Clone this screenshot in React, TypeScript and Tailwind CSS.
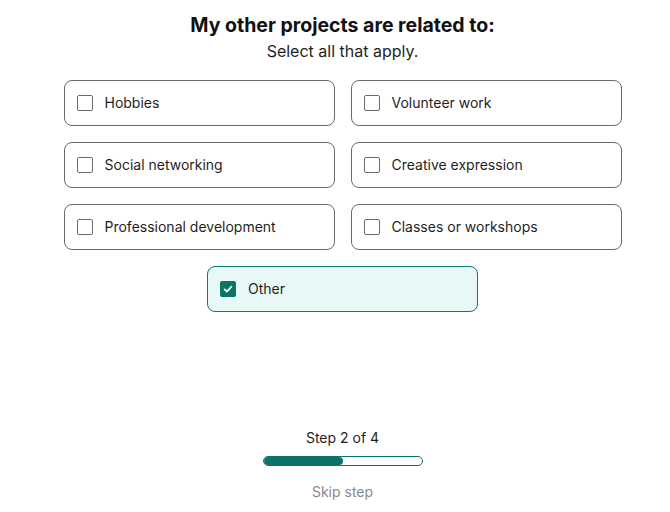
import { useState } from "react";

const OPTIONS = [
  "Hobbies",
  "Volunteer work",
  "Social networking",
  "Creative expression",
  "Professional development",
  "Classes or workshops",
];

function Option({ label, checked, onToggle }: { label: string; checked: boolean; onToggle: () => void }) {
  return (
    <button
      type="button"
      onClick={onToggle}
      className={
        "flex h-[46px] w-[271px] items-center gap-3 rounded-[8px] border px-[12px] pb-[1px] text-left text-[14px] text-[#1f1f1f] " +
        (checked ? "border-[#0d7a6b] bg-[#e8f8f7]" : "border-[#6b6b6b] bg-white")
      }
    >
      {checked ? (
        <span className="flex h-4 w-4 items-center justify-center rounded-[2px] bg-[#0a7566]">
          <svg viewBox="0 0 16 16" className="h-3 w-3" fill="none" stroke="white" strokeWidth="2.4" strokeLinecap="round" strokeLinejoin="round">
            <path d="M3.5 8.5l3 3 6-6.5" />
          </svg>
        </span>
      ) : (
        <span className="h-4 w-4 rounded-[2px] border border-[#6b6b6b] bg-white" />
      )}
      <span>{label}</span>
    </button>
  );
}

export default function App() {
  const [selected, setSelected] = useState<string[]>(["Other"]);
  const toggle = (l: string) =>
    setSelected((s) => (s.includes(l) ? s.filter((x) => x !== l) : [...s, l]));

  return (
    <div
      className="flex h-[512px] w-[670px] flex-col items-center bg-white pl-[15px]"
      style={{ fontFamily: "Inter, 'Noto Sans', sans-serif" }}
    >
      <h1 className="mt-[12px] text-[19.5px] font-bold leading-[26px] text-[#111]">
        My other projects are related to:
      </h1>
      <p className="mt-[2px] text-[16px] leading-[22px] text-[#1f1f1f]">Select all that apply.</p>

      <div className="mt-[18px] grid grid-cols-[271px_271px] gap-x-[16px] gap-y-[16px]">
        {OPTIONS.map((o) => (
          <Option key={o} label={o} checked={selected.includes(o)} onToggle={() => toggle(o)} />
        ))}
      </div>
      <div className="mt-[16px]">
        <Option label="Other" checked={selected.includes("Other")} onToggle={() => toggle("Other")} />
      </div>

      <div className="mt-auto mb-[10px] flex flex-col items-center">
        <div className="text-[14px] leading-[20px] text-[#1f1f1f]">Step 2 of 4</div>
        <div className="mt-[8px] h-[10px] w-[160px] overflow-hidden rounded-full border border-[#0a7566]">
          <div className="h-full w-1/2 rounded-full bg-[#0a7566]" />
        </div>
        <button type="button" className="mt-[16px] text-[14px] leading-[20px] text-[#8a8a8a]">
          Skip step
        </button>
      </div>
    </div>
  );
}
